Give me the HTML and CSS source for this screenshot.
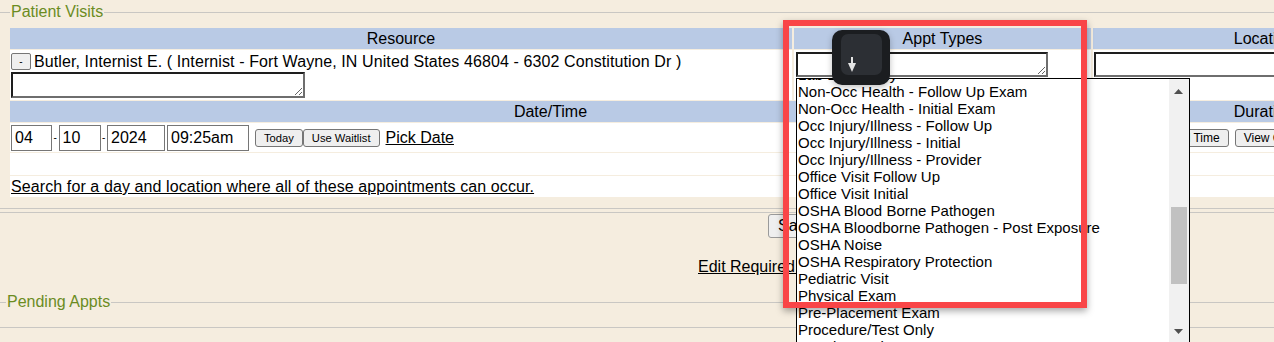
FILE: index.html
```html
<!DOCTYPE html>
<html lang="en">
<head>
    <meta charset="UTF-8">
    <title>Patient Visits</title>
    <link rel="stylesheet" href="styles.css">
</head>
<body>
    <fieldset class="group visits-group">
        <legend class="group-title">Patient Visits</legend>
        <div class="visits">
            <div class="head">Resource</div>
            <div class="head">Appt Types</div>
            <div class="head">Location</div>

            <div class="cell resource">
                <div class="resource-line"><button class="btn-mini">-</button><span class="resource-name">Butler, Internist E. ( Internist - Fort Wayne, IN United States 46804 - 6302 Constitution Dr )</span></div>
                <textarea class="note note-resource"></textarea>
            </div>
            <div class="cell pick"><textarea class="note note-appt"></textarea></div>
            <div class="cell pick"><textarea class="note note-loc"></textarea></div>

            <div class="head span-2">Date/Time</div>
            <div class="head">Duration</div>

            <div class="cell span-2 date-row">
                <input class="field f-month" type="text" value="04">
                <span class="dash">-</span>
                <input class="field f-day" type="text" value="10">
                <span class="dash">-</span>
                <input class="field f-year" type="text" value="2024">
                <input class="field f-time" type="text" value="09:25am">
                <button class="btn-small btn-today">Today</button>
                <button class="btn-small">Use Waitlist</button>
                <a class="link pick-date" href="#">Pick Date</a>
            </div>
            <div class="cell time-row">
                <input class="field f-dur" type="text" value="15">
                <button class="btn-time">Find Time</button>
                <button class="btn-time btn-view">View Calendar</button>
            </div>

            <div class="cell span-2"></div>
            <div class="cell"></div>

            <div class="cell span-2 search-row">
                <a class="link" href="#">Search for a day and location where all of these appointments can occur.</a>
            </div>
            <div class="cell"></div>
        </div>
    </fieldset>

    <div class="actions">
        <button class="btn-save">Save Visits</button>
    </div>
    <div class="edit-line">
        <a class="link" href="#">Edit Required Fields</a>
    </div>

    <fieldset class="group pending-group">
        <legend class="group-title">Pending Appts</legend>
    </fieldset>

    <!-- open appt type list -->
    <div class="listbox">
        <ul class="options">
            <li>Lab Draw Only</li>
            <li>Non-Occ Health - Follow Up Exam</li>
            <li>Non-Occ Health - Initial Exam</li>
            <li>Occ Injury/Illness - Follow Up</li>
            <li>Occ Injury/Illness - Initial</li>
            <li>Occ Injury/Illness - Provider</li>
            <li>Office Visit Follow Up</li>
            <li>Office Visit Initial</li>
            <li>OSHA Blood Borne Pathogen</li>
            <li>OSHA Bloodborne Pathogen - Post Exposure</li>
            <li>OSHA Noise</li>
            <li>OSHA Respiratory Protection</li>
            <li>Pediatric Visit</li>
            <li>Physical Exam</li>
            <li>Pre-Placement Exam</li>
            <li>Procedure/Test Only</li>
            <li>Respirator Fit Test</li>
        </ul>
        <div class="scrollbar">
            <svg class="arrow-up" width="9" height="5" viewBox="0 0 9 5"><path d="M0 5 L4.5 0 L9 5 Z" fill="#505050"/></svg>
            <div class="thumb"></div>
            <svg class="arrow-down" width="9" height="5" viewBox="0 0 9 5"><path d="M0 0 L4.5 5 L9 0 Z" fill="#505050"/></svg>
        </div>
    </div>

    <div class="highlight"></div>

    <div class="keycap">
        <div class="keycap-face">
            <svg width="10" height="16" viewBox="0 0 10 16"><rect x="4" y="0" width="2" height="8" fill="#e4e4e4"/><path d="M1 6 L9 6 L5 15 Z" fill="#e4e4e4"/></svg>
        </div>
    </div>
</body>
</html>
```

FILE: styles.css
```css
html {
    overflow: hidden;
}

body {
    margin: 0;
    background-color: #f5eddf;
    font-family: "Liberation Sans", Arial, sans-serif;
    font-size: 16px;
    color: #000;
    width: 1500px;
}

.group {
    margin: 3px 0 0 0;
    border: none;
    border-top: 1px solid #c9c7c3;
    border-bottom: 1px solid #c9c7c3;
    padding: 7px 0 11px 10px;
}

.group-title {
    color: #6b8c1f;
    font-size: 16px;
    line-height: 18px;
    padding: 0 1px;
}

.visits {
    display: grid;
    grid-template-columns: 782px 297px 342px;
    grid-template-rows: 21px 50px 21px 29px 22px 21px;
    column-gap: 2px;
    row-gap: 1px;
}

.head {
    background-color: #b9cae5;
    text-align: center;
    font-size: 16px;
    line-height: 21px;
}

.cell {
    background-color: #fff;
}

.span-2 {
    grid-column: span 2;
}

.resource {
    padding: 3px 0 0 1px;
}

.resource-line {
    display: flex;
    align-items: center;
    height: 17px;
}

.resource-name {
    margin-left: 3px;
    line-height: 17px;
    letter-spacing: 0.1px;
}

.btn-mini {
    width: 20px;
    height: 17px;
    padding: 0;
    font-size: 10px;
    background-color: #efefef;
    border: 1px solid #767676;
    border-radius: 2px;
}

.note {
    display: block;
    box-sizing: border-box;
    border: 2px solid;
    border-color: #1e1e1e #6e6e6e #6e6e6e #1e1e1e;
    margin: 0;
    padding: 1px;
    background: #fff;
}

.note-resource {
    width: 294px;
    height: 26px;
    margin-top: 2px;
}

.pick {
    padding: 2px 0 0 2px;
}

.note-appt {
    width: 252px;
    height: 25px;
}

.note-loc {
    width: 330px;
    height: 25px;
    margin-left: -1px;
}

.date-row,
.time-row {
    display: flex;
    align-items: center;
    padding-left: 1px;
}

.field {
    box-sizing: border-box;
    height: 26px;
    border: 1px solid #767676;
    border-radius: 0;
    padding: 0 3px;
    font-family: "Liberation Sans", Arial, sans-serif;
    font-size: 16px;
    margin: 0;
}

.f-month { width: 41px; }
.f-day { width: 42px; }
.f-year { width: 58px; }
.f-time { width: 82px; margin-left: 2px; }
.f-dur { width: 58px; }

.dash {
    width: 6.5px;
    text-align: center;
    font-size: 10px;
}

.btn-small {
    height: 18px;
    padding: 0 8px;
    margin: 1px 0 0 0;
    font-family: "Liberation Sans", Arial, sans-serif;
    font-size: 11.2px;
    background-color: #efefef;
    border: 1px solid #767676;
    border-radius: 3px;
}

.btn-today {
    margin-left: 6px;
}

.pick-date {
    margin-left: 6px;
}

.link {
    color: #000;
    text-decoration: underline;
}

.btn-time {
    height: 18px;
    padding: 0 8px;
    margin-left: 6px;
    font-family: "Liberation Sans", Arial, sans-serif;
    font-size: 12px;
    background-color: #efefef;
    border: 1px solid #767676;
    border-radius: 3px;
}

.search-row {
    padding-left: 1px;
    line-height: 21px;
    letter-spacing: 0.1px;
}

.actions {
    border-top: 1px solid #c9c7c3;
    margin-top: 3px;
    padding: 1px 0 0 768px;
}

.btn-save {
    height: 24px;
    padding: 0 9px;
    font-family: "Liberation Sans", Arial, sans-serif;
    font-size: 16px;
    background-color: #efefef;
    border: 1px solid #9a9a9a;
    border-radius: 3px;
}

.edit-line {
    padding-left: 698px;
    margin-top: 20px;
    font-size: 16px;
    line-height: 18px;
}

.pending-group {
    margin-top: 17px;
    padding: 0 0 16px 6px;
}

/* dropdown list opened over the form */
.listbox {
    position: absolute;
    left: 796px;
    top: 78px;
    width: 392px;
    height: 270px;
    border: 1px solid #000;
    background-color: #fff;
    overflow: hidden;
}

.options {
    list-style: none;
    margin: -13px 0 0 0;
    padding: 0 0 0 1px;
    font-size: 15px;
    line-height: 17px;
}

.scrollbar {
    position: absolute;
    top: 0;
    right: 0;
    width: 20px;
    height: 100%;
    background-color: #f1f1f1;
}

.arrow-up {
    position: absolute;
    left: 5px;
    top: 10px;
}

.thumb {
    position: absolute;
    left: 2px;
    top: 128px;
    width: 16px;
    height: 77px;
    background-color: #c1c1c1;
}

.arrow-down {
    position: absolute;
    left: 5px;
    top: 250px;
}

.highlight {
    position: absolute;
    left: 783px;
    top: 20px;
    width: 292px;
    height: 276px;
    border: 6px solid #f94547;
    box-shadow: 0 3px 7px rgba(0, 0, 0, 0.35);
}

.keycap {
    position: absolute;
    left: 832px;
    top: 30px;
    width: 41px;
    height: 41px;
    padding: 4px 8px 10px 9px;
    background-color: #1b1d20;
    border-radius: 10px;
    box-shadow: 0 2px 6px rgba(0, 0, 0, 0.25);
}

.keycap-face {
    width: 41px;
    height: 41px;
    background-color: #2c2f34;
    border-radius: 7px;
    box-sizing: border-box;
    padding: 23px 0 0 6px;
}

.keycap-face svg {
    display: block;
}
```
